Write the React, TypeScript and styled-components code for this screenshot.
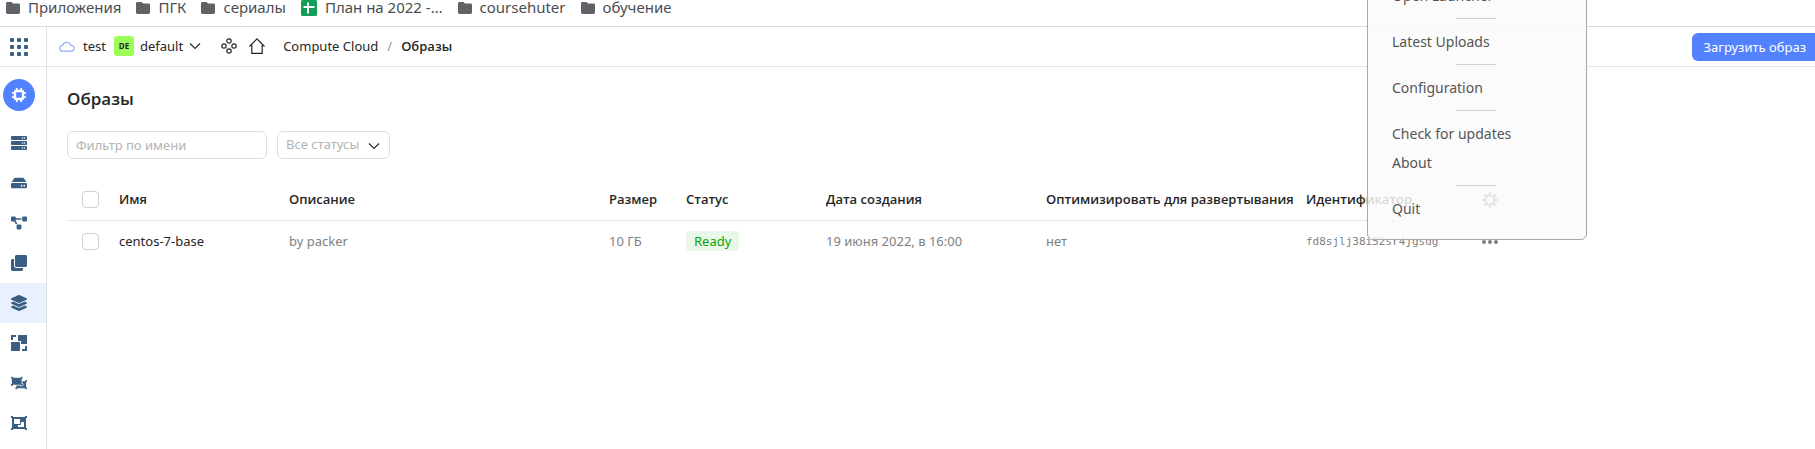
import React from 'react';
import styled, { createGlobalStyle, css } from 'styled-components';
import { FaServer, FaHdd, FaProjectDiagram, FaClone, FaLayerGroup, FaObjectUngroup, FaObjectGroup } from 'react-icons/fa';

const uiFont = "'Noto Sans', 'Open Sans', sans-serif";
const strongFont = "'Open Sans', 'Noto Sans', sans-serif";

const GlobalStyle = createGlobalStyle`
  *, *::before, *::after { box-sizing: border-box; }
  html, body { margin: 0; background: #fff; }
  body { font-family: ${uiFont}; font-size: 13px; line-height: 18px; color: #262626; overflow: hidden; }
  button, input, select { font: inherit; color: inherit; margin: 0; }
  a { color: inherit; text-decoration: none; }
  svg { display: block; flex: none; }
`;

const Page = styled.div`
  display: flex;
  flex-direction: column;
  min-height: 100vh;
`;

const BookmarksBar = styled.nav`
  display: flex;
  gap: 15px;
  padding: 0 6px 11px;
  border-bottom: 1px solid #dadce0;
`;

const Bookmark = styled.a`
  display: flex;
  align-items: center;
  gap: 8px;
  height: 15px;
  font-size: 15px;
  line-height: 15px;
  color: #4a4d51;
  white-space: nowrap;
`;

const Header = styled.header`
  display: flex;
  height: 40px;
  border-bottom: 1px solid #e5e5e5;
`;

const AppsButton = styled.button`
  display: flex;
  align-items: center;
  width: 47px;
  padding: 0 0 0 10px;
  border: 0;
  border-right: 1px solid #e0e0e0;
  background: none;
`;

const HeaderBody = styled.div`
  display: flex;
  flex: 1;
  align-items: center;
  justify-content: space-between;
  padding-left: 12px;
`;

const HeaderGroup = styled.div`
  display: flex;
  align-items: center;
  padding-bottom: 1px;
  white-space: nowrap;
`;

const FolderSwitcher = styled.button`
  display: flex;
  align-items: center;
  padding: 0;
  margin-right: 20px;
  border: 0;
  background: none;
`;

const CloudName = styled.span`
  margin: 0 8px;
`;

const FolderBadge = styled.span`
  width: 20px;
  height: 20px;
  margin-right: 6px;
  border-radius: 3px;
  background: #9cff57;
  font-size: 8px;
  font-weight: 700;
  line-height: 20px;
  text-align: center;
`;

const FolderName = styled.span`
  margin-right: 6px;
`;

const IconLink = styled.a`
  margin-right: 12px;
`;

const Breadcrumbs = styled.nav`
  display: flex;
  gap: 9px;
  margin-left: 6px;
`;

const Slash = styled.span`
  color: #999;
`;

const Current = styled.span`
  font-family: ${strongFont};
  font-weight: 600;
`;

const UploadButton = styled.button`
  height: 28px;
  padding: 0 9px 0 12px;
  border: 0;
  border-radius: 6px 0 0 6px;
  background: #5282ff;
  color: #fff;
  line-height: 26px;
`;

const Body = styled.div`
  display: flex;
  flex: 1;
`;

const Sidebar = styled.nav`
  flex: none;
  width: 47px;
  padding-top: 8px;
  border-right: 1px solid #e0e0e0;
`;

const ServiceLink = styled.a`
  display: grid;
  place-items: center;
  width: 32px;
  height: 32px;
  margin: 4px 3px 12px;
  border-radius: 50%;
  background: #5282ff;
`;

const SideLink = styled.a<{ $active?: boolean }>`
  display: flex;
  align-items: center;
  height: 40px;
  padding-left: 11px;
  color: #3b5f82;
  ${p => p.$active && css`background: #e9f0ff;`}
`;

const Main = styled.main`
  flex: 1;
  min-width: 0;
  padding: 20px 20px 0;
`;

const Title = styled.h1`
  margin: 0 0 20px;
  font-family: ${strongFont};
  font-size: 17px;
  font-weight: 600;
  line-height: 24px;
`;

const Filters = styled.form`
  display: flex;
  gap: 10px;
  margin-bottom: 18px;
`;

const NameFilter = styled.input`
  width: 200px;
  height: 28px;
  padding: 0 8px;
  border: 1px solid #e0e0e0;
  border-radius: 6px;
  background: #fff;
  &::placeholder { color: #b3b3b3; opacity: 1; }
`;

const StatusFilter = styled.label`
  position: relative;
  svg { position: absolute; right: 10px; top: 11px; pointer-events: none; }
`;

const StatusSelect = styled.select`
  appearance: none;
  width: 113px;
  height: 28px;
  padding: 0 8px 2px;
  border: 1px solid #e0e0e0;
  border-radius: 6px;
  background: #fff;
  color: #b3b3b3;
`;

const Images = styled.table`
  width: 1452px;
  table-layout: fixed;
  border-collapse: collapse;
`;

const Col = styled.col<{ $w: number }>`
  width: ${p => p.$w}px;
`;

const Th = styled.th`
  height: 43px;
  padding: 2px 0 0;
  border-bottom: 1px solid #e5e5e5;
  font-family: ${strongFont};
  font-weight: 600;
  text-align: left;
  white-space: nowrap;
`;

const Td = styled.td<{ $strong?: boolean; $mono?: boolean }>`
  height: 42px;
  padding: 0;
  color: ${p => (p.$strong ? '#262626' : '#7f7f7f')};
  white-space: nowrap;
  ${p => p.$mono && css`
    padding-top: 2px;
    font-family: 'DejaVu Sans Mono', monospace;
    font-size: 11px;
  `}
`;

const Check = styled.input`
  display: block;
  appearance: none;
  width: 17px;
  height: 17px;
  margin: 0 0 0 15px;
  border: 1px solid #d0d0d0;
  border-radius: 4px;
  background: #fff;
`;

const Status = styled.span`
  display: inline-block;
  height: 20px;
  padding: 0 8px;
  border-radius: 4px;
  background: #e9f8e9;
  color: #0aa30a;
  line-height: 20px;
`;

const IconButton = styled.button`
  display: block;
  padding: 2px 0 0;
  border: 0;
  background: none;
  color: #7f7f7f;
`;

const TrayMenu = styled.div`
  position: absolute;
  top: -31px;
  right: 228px;
  width: 220px;
  padding: 11px 0 16px;
  border: 1px solid #a8a8a8;
  border-radius: 6px;
  background: rgba(250, 250, 250, 0.84);
`;

const TrayItem = styled.button`
  display: block;
  width: 100%;
  height: 29px;
  padding: 0 24px;
  border: 0;
  background: none;
  color: #555;
  font-size: 14px;
  line-height: 28px;
  text-align: left;
`;

const TraySeparator = styled.hr`
  width: 40px;
  height: 1px;
  margin: 8px 88px;
  border: 0;
  background: #d0d0d0;
`;

const FolderIcon = () => (
  <svg width="14" height="12" viewBox="0 0 14 12" fill="#5f6368">
    <path d="M1.4 0h4.2L7 1.6h5.6A1.4 1.4 0 0 1 14 3v7.6a1.4 1.4 0 0 1-1.4 1.4H1.4A1.4 1.4 0 0 1 0 10.6V1.4A1.4 1.4 0 0 1 1.4 0z" />
  </svg>
);

const SheetIcon = () => (
  <svg width="16" height="16" viewBox="0 0 16 16">
    <rect width="16" height="16" rx="1.5" fill="#0f9d58" />
    <path d="M6 2.500h2V6h5.500v2H8v5.500H6V8H2.500V6H6z" fill="#fff" />
  </svg>
);

const Chevron = () => (
  <svg width="12" height="8" viewBox="0 0 12 8" fill="none" stroke="#262626" strokeWidth="1.1">
    <path d="M1 1.500 6 6.500 11 1.500" />
  </svg>
);

const AppsIcon = () => (
  <svg width="18" height="18" viewBox="0 0 18 18" fill="#3b5f82">
    {[0, 7, 14].map(y => [0, 7, 14].map(x => <rect key={`${x}-${y}`} x={x} y={y} width="4" height="4" rx="1" />))}
  </svg>
);

const CloudIcon = () => (
  <svg width="16" height="12" viewBox="0 0 16 12" fill="none" stroke="#8daaff" strokeWidth="1.2">
    <path d="M3.800 11.200h8.600a2.900 2.900 0 0 0 .5-5.700 2.700 2.700 0 0 0-1.300-.4A4 4 0 0 0 3.900 5.200a3 3 0 0 0-.1 6z" />
  </svg>
);

const OrgIcon = () => (
  <svg width="16" height="16" viewBox="0 0 16 16" fill="none" stroke="#262626" strokeWidth="1.2">
    <circle cx="8" cy="3" r="2.200" />
    <circle cx="8" cy="13" r="2.200" />
    <circle cx="3" cy="8" r="2.200" />
    <circle cx="13" cy="8" r="2.200" />
  </svg>
);

const HomeIcon = () => (
  <svg width="16" height="16" viewBox="0 0 16 16" fill="none" stroke="#262626" strokeWidth="1.2">
    <path d="M.5 8.500 8 .9l7.500 7.600M2.800 7v8.400h10.400V7" />
  </svg>
);

const ChipIcon = () => (
  <svg width="14" height="14" viewBox="0 0 14 14" fill="none" stroke="#fff">
    <rect x="3" y="3" width="8" height="8" rx="1" strokeWidth="2.400" />
    <path d="M4.800 0v3M9.200 0v3M4.800 11v3M9.200 11v3M0 4.800h3M0 9.200h3M11 4.800h3M11 9.200h3" strokeWidth="1.800" />
  </svg>
);

const SnapshotIcon = () => (
  <svg width="16" height="16" viewBox="0 0 16 16" fill="currentColor">
    <path d="M0 0h5v2H2v3H0zM7 0h9v9h-6V6H7zM0 7h9v9H0zM14 11h2v5h-5v-2h3z" />
  </svg>
);

const sideItems: { label: string; active?: boolean; icon: React.ReactNode }[] = [
  { label: 'Виртуальные машины', icon: <FaServer size={16} /> },
  { label: 'Диски', icon: <FaHdd size={16} /> },
  { label: 'Группы виртуальных машин', icon: <FaProjectDiagram size={16} /> },
  { label: 'Снимки дисков', icon: <FaClone size={16} /> },
  { label: 'Образы', active: true, icon: <FaLayerGroup size={16} /> },
  { label: 'Группы размещения', icon: <SnapshotIcon /> },
  { label: 'Пулы', icon: <FaObjectUngroup size={16} /> },
  { label: 'Выделенные хосты', icon: <FaObjectGroup size={16} /> },
];

const GearIcon = () => (
  <svg width="16" height="16" viewBox="0 0 16 16" fill="none" stroke="currentColor">
    <circle cx="8" cy="8" r="4.500" strokeWidth="2.200" />
    {[0, 45, 90, 135, 180, 225, 270, 315].map(a => (
      <path key={a} d="M8 0v3.200" strokeWidth="2.200" transform={`rotate(${a} 8 8)`} />
    ))}
  </svg>
);

const DotsIcon = () => (
  <svg width="16" height="16" viewBox="0 0 16 16" fill="#808080">
    <circle cx="2" cy="8" r="2" /><circle cx="8" cy="8" r="2" /><circle cx="14" cy="8" r="2" />
  </svg>
);

const bookmarks = [
  { name: 'Приложения' },
  { name: 'ПГК' },
  { name: 'сериалы' },
  { name: 'План на 2022 -…', sheet: true },
  { name: 'coursehuter' },
  { name: 'обучение' },
];

const headings = ['Имя', 'Описание', 'Размер', 'Статус', 'Дата создания', 'Оптимизировать для развертывания', 'Идентификатор'];
const columnWidths = [52, 170, 320, 77, 140, 220, 260, 176, 37];

export default function App() {
  return (
    <Page>
      <GlobalStyle />
      <BookmarksBar>
        {bookmarks.map(b => (
          <Bookmark href="#" key={b.name}>
            {b.sheet ? <SheetIcon /> : <FolderIcon />}
            {b.name}
          </Bookmark>
        ))}
      </BookmarksBar>
      <Header>
        <AppsButton aria-label="Все сервисы"><AppsIcon /></AppsButton>
        <HeaderBody>
          <HeaderGroup>
            <FolderSwitcher>
              <CloudIcon />
              <CloudName>test</CloudName>
              <FolderBadge>DE</FolderBadge>
              <FolderName>default</FolderName>
              <Chevron />
            </FolderSwitcher>
            <IconLink href="#" aria-label="Организация"><OrgIcon /></IconLink>
            <IconLink href="#" aria-label="Главная"><HomeIcon /></IconLink>
            <Breadcrumbs>
              <a href="#">Compute Cloud</a>
              <Slash>/</Slash>
              <Current>Образы</Current>
            </Breadcrumbs>
          </HeaderGroup>
          <UploadButton>Загрузить образ</UploadButton>
        </HeaderBody>
      </Header>
      <Body>
        <Sidebar>
          <ServiceLink href="#" aria-label="Compute Cloud"><ChipIcon /></ServiceLink>
          {sideItems.map(item => (
            <SideLink href="#" key={item.label} aria-label={item.label} $active={item.active}>
              {item.icon}
            </SideLink>
          ))}
        </Sidebar>
        <Main>
          <Title>Образы</Title>
          <Filters>
            <NameFilter placeholder="Фильтр по имени" aria-label="Фильтр по имени" />
            <StatusFilter>
              <StatusSelect aria-label="Статус">
                <option>Все статусы</option>
              </StatusSelect>
              <Chevron />
            </StatusFilter>
          </Filters>
          <Images>
            <colgroup>
              {columnWidths.map((w, i) => <Col key={i} $w={w} />)}
            </colgroup>
            <thead>
              <tr>
                <Th><Check type="checkbox" aria-label="Выбрать все" /></Th>
                {headings.map(h => <Th key={h}>{h}</Th>)}
                <Th><IconButton aria-label="Настройки таблицы"><GearIcon /></IconButton></Th>
              </tr>
            </thead>
            <tbody>
              <tr>
                <Td><Check type="checkbox" aria-label="Выбрать centos-7-base" /></Td>
                <Td $strong><a href="#">centos-7-base</a></Td>
                <Td>by packer</Td>
                <Td>10 ГБ</Td>
                <Td><Status>Ready</Status></Td>
                <Td>19 июня 2022, в 16:00</Td>
                <Td>нет</Td>
                <Td $mono>fd8sjlj38i52sr4jgsdg</Td>
                <Td><IconButton aria-label="Действия"><DotsIcon /></IconButton></Td>
              </tr>
            </tbody>
          </Images>
        </Main>
      </Body>
      <TrayMenu>
        <TrayItem>Open Launcher</TrayItem>
        <TraySeparator />
        <TrayItem>Latest Uploads</TrayItem>
        <TraySeparator />
        <TrayItem>Configuration</TrayItem>
        <TraySeparator />
        <TrayItem>Check for updates</TrayItem>
        <TrayItem>About</TrayItem>
        <TraySeparator />
        <TrayItem>Quit</TrayItem>
      </TrayMenu>
    </Page>
  );
}
